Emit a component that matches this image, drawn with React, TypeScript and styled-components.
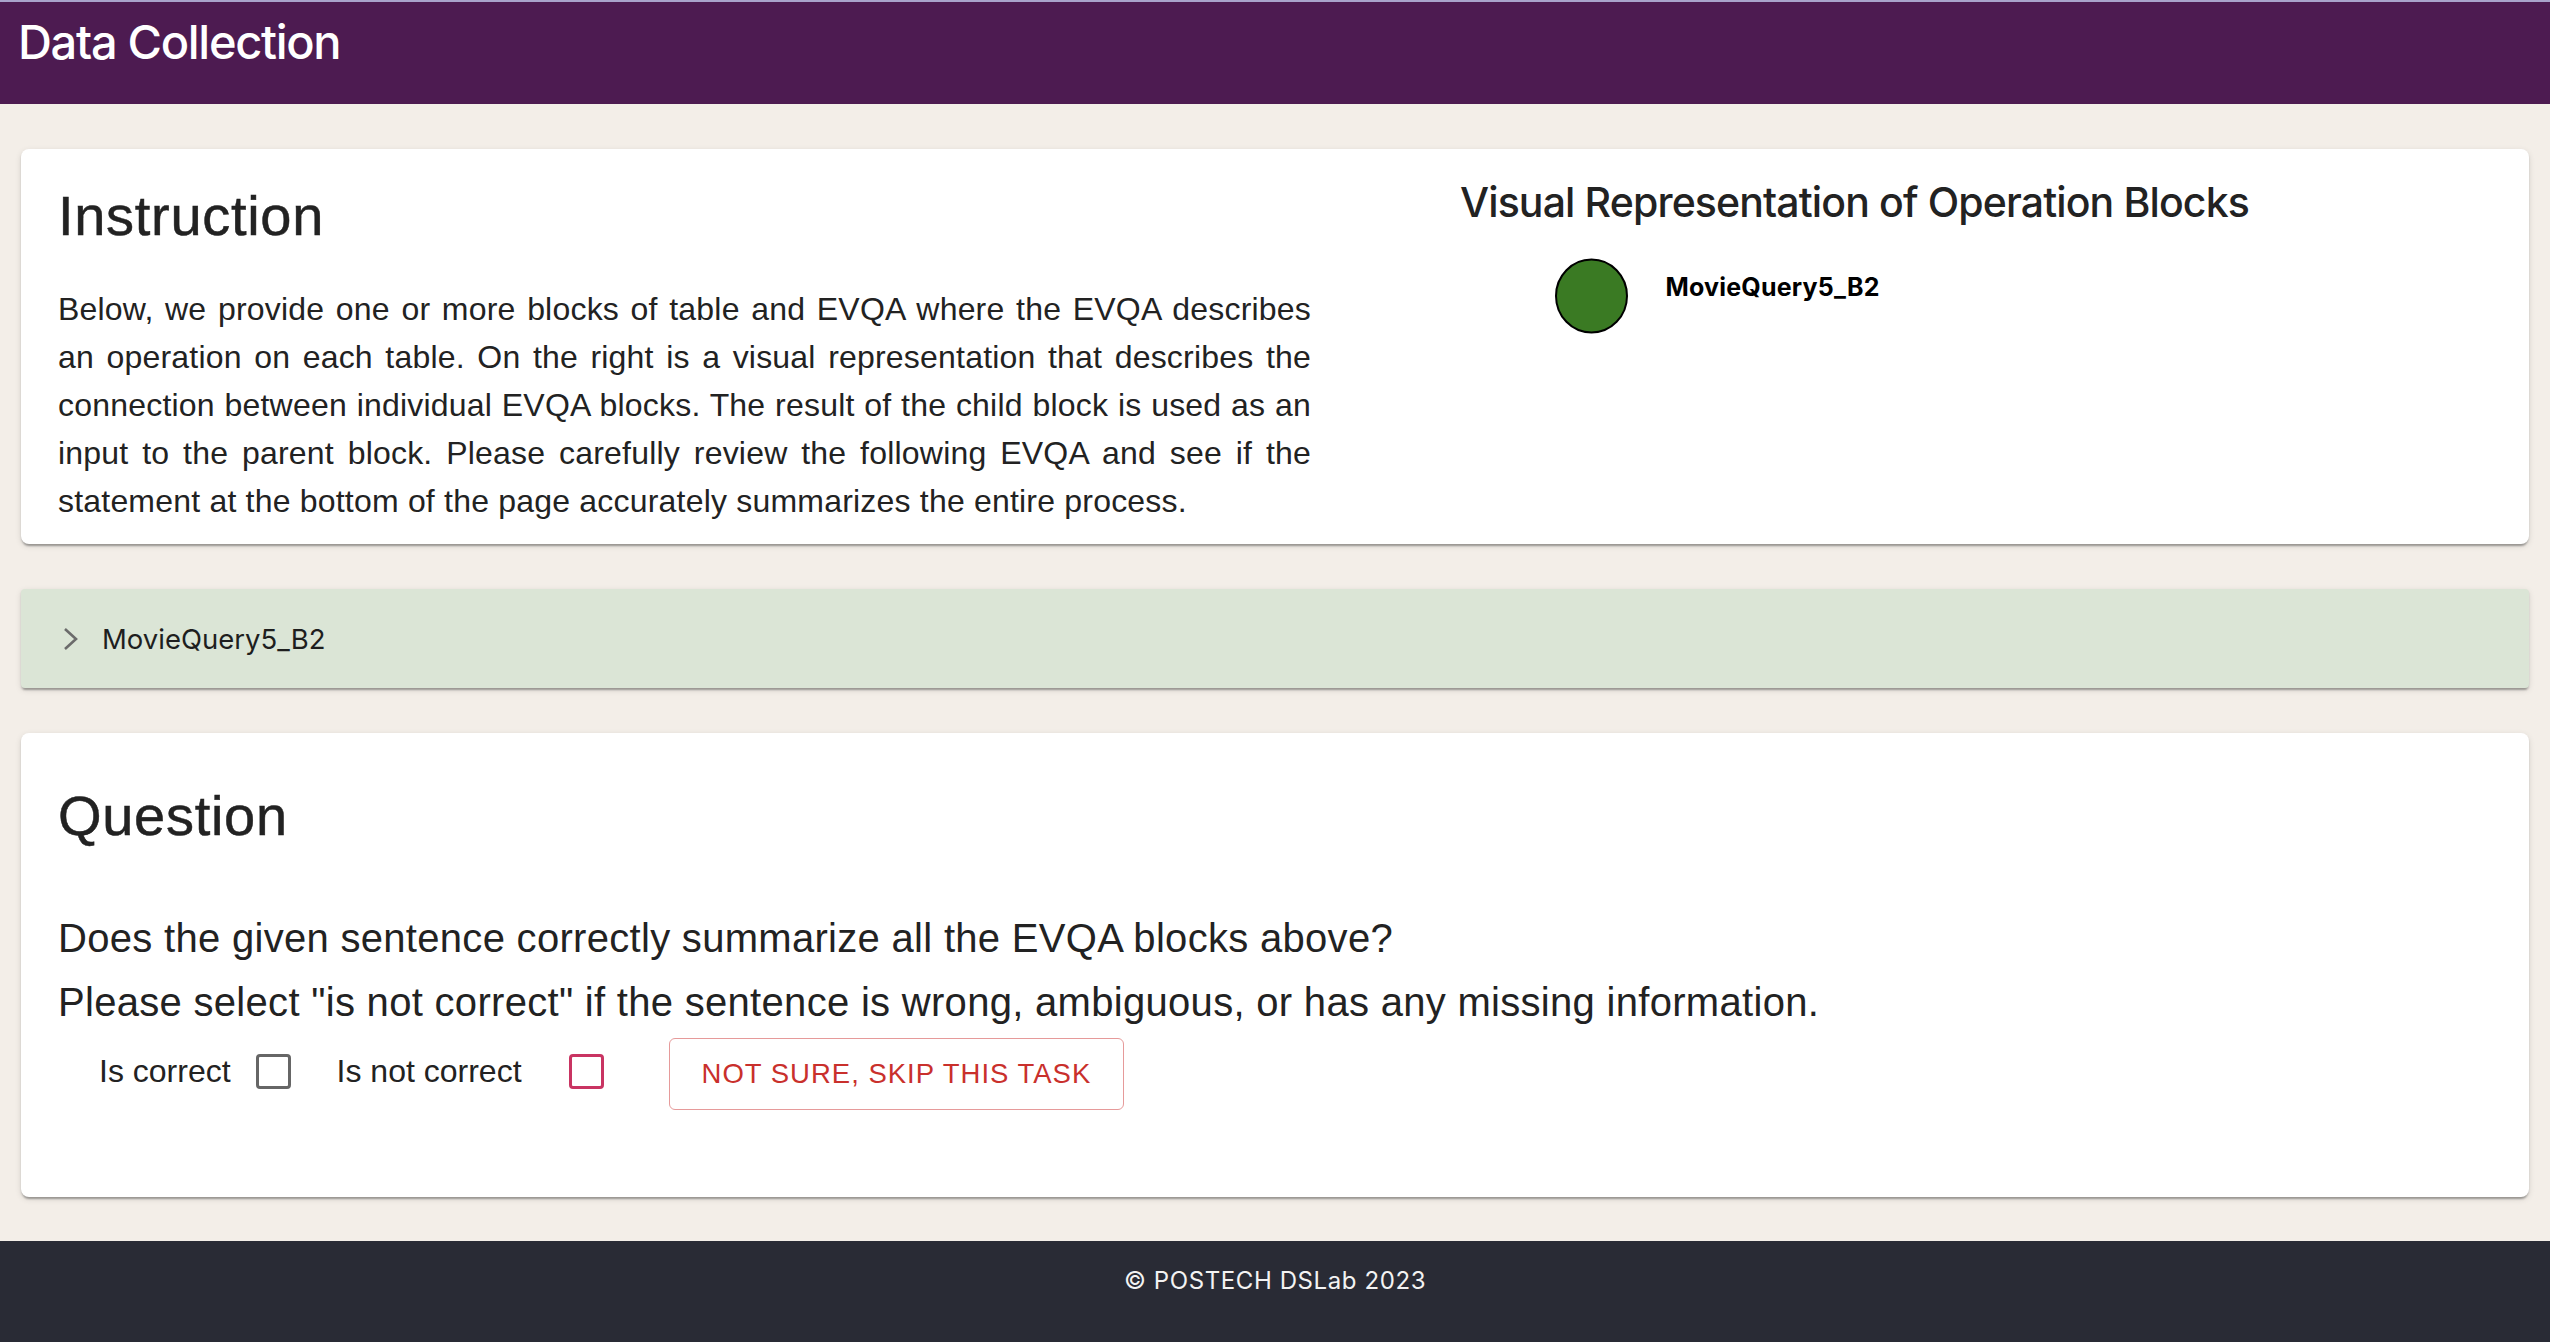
import React from "react";
import styled, { createGlobalStyle } from "styled-components";

const GlobalStyle = createGlobalStyle`
  html, body { margin: 0; padding: 0; }
  body {
    background: #f3eee8;
    font-family: "Liberation Sans", Arial, sans-serif;
    color: #222222;
  }
  * { box-sizing: border-box; }
`;

const Page = styled.div`
  display: flex;
  flex-direction: column;
  min-height: 1342px;
`;

const Header = styled.header`
  height: 104px;
  background: #4d1b51;
  border-top: 2px solid #a9a3cb;
  padding: 12px 18px 0;
`;

const Title = styled.h1`
  margin: 0;
  font-family: Inter, "Noto Sans", sans-serif;
  font-weight: 500;
  font-size: 47px;
  line-height: 1.2;
  color: #ffffff;
  letter-spacing: -1.3px;
`;

const Main = styled.main`
  flex: 1;
  display: flex;
  flex-direction: column;
  gap: 45px;
  padding: 45px 21px 44px;
`;

const Card = styled.section<{ $pt: number; $pb: number }>`
  background: #ffffff;
  border-radius: 8px;
  padding: ${(p) => p.$pt}px 37px ${(p) => p.$pb}px;
  box-shadow: 0 4px 2px -2px rgba(0, 0, 0, 0.2), 0 2px 2px 0 rgba(0, 0, 0, 0.14),
    0 2px 6px 0 rgba(0, 0, 0, 0.12);
`;

const InstructionGrid = styled.div`
  display: grid;
  grid-template-columns: 1253px 1fr;
  column-gap: 149px;
`;

const Column = styled.div`
  display: flex;
  flex-direction: column;
`;

const SectionTitle = styled.h2<{ $mt?: number; $mb: number }>`
  margin: ${(p) => p.$mt ?? 0}px 0 ${(p) => p.$mb}px;
  font-family: "Liberation Sans", Arial, sans-serif;
  font-weight: 400;
  font-size: 56px;
  line-height: 1.2;
  letter-spacing: 0.7px;
  color: #222222;
  -webkit-text-stroke: 0.5px #222222;
`;

const Paragraph = styled.p`
  margin: 0;
  font-size: 32px;
  line-height: 48px;
  letter-spacing: 0.2px;
  text-align: justify;
  color: #222222;
`;

const VisualTitle = styled.h3`
  margin: 0;
  font-family: Inter, "Noto Sans", sans-serif;
  font-weight: 500;
  font-size: 41px;
  line-height: 1.2;
  color: #222222;
  letter-spacing: -0.87px;
  white-space: nowrap;
`;

const Graph = styled.svg`
  display: block;
  width: 100%;
  height: 150px;
`;

const NodeLabel = styled.text`
  font-family: Inter, "Noto Sans", sans-serif;
  font-weight: 700;
  font-size: 25px;
  letter-spacing: 0.2px;
  fill: #000000;
`;

const AccordionBar = styled.div`
  height: 99px;
  background: #dbe5d6;
  border-radius: 4px;
  display: flex;
  align-items: center;
  gap: 23px;
  padding-left: 42px;
  box-shadow: 0 4px 2px -2px rgba(0, 0, 0, 0.2), 0 2px 2px 0 rgba(0, 0, 0, 0.14),
    0 2px 6px 0 rgba(0, 0, 0, 0.12);
`;

const AccordionLabel = styled.span`
  font-family: Inter, "Noto Sans", sans-serif;
  font-size: 27.5px;
  color: #1e1e1e;
`;

const QuestionLine = styled.p`
  margin: 0;
  font-size: 40px;
  line-height: 64px;
  letter-spacing: 0.3px;
  color: #222222;
  white-space: nowrap;
`;

const Controls = styled.div`
  display: flex;
  align-items: center;
  margin-top: 4px;
  padding-left: 41px;
  height: 72px;
`;

const OptionLabel = styled.label<{ $gap: number; $after: number }>`
  display: inline-flex;
  align-items: center;
  gap: ${(p) => p.$gap}px;
  margin-right: ${(p) => p.$after}px;
  font-size: 32px;
  color: #222222;
  cursor: pointer;
  span { position: relative; top: -3px; }
`;

const Box = styled.span<{ $color: string }>`
  display: inline-block;
  width: 35px;
  height: 35px;
  border: 3.5px solid ${(p) => p.$color};
  border-radius: 4px;
  background: #ffffff;
`;

const SkipButton = styled.button`
  height: 72px;
  padding: 0 32px;
  background: #ffffff;
  border: 1.5px solid #e69a9a;
  border-radius: 6px;
  font-family: "Liberation Sans", Arial, sans-serif;
  font-size: 27.5px;
  letter-spacing: 1px;
  text-transform: uppercase;
  color: #c9302c;
  cursor: pointer;
`;

const Footer = styled.footer`
  background: #292b35;
  padding: 26px 0 46px;
  text-align: center;
  font-family: Inter, "Noto Sans", sans-serif;
  font-size: 24px;
  line-height: 1.2;
  letter-spacing: 0.6px;
  color: #f3f3f3;
`;

const Chevron = () => (
  <svg width="16" height="24" viewBox="0 0 16 24" aria-hidden="true">
    <polyline points="2,2 13,12 2,22" fill="none" stroke="#6b6b6b" strokeWidth="2.6" />
  </svg>
);

export default function App() {
  return (
    <>
      <GlobalStyle />
      <Page>
        <Header>
          <Title>Data Collection</Title>
        </Header>
        <Main>
          <Card $pt={29} $pb={19}>
            <InstructionGrid>
              <Column>
                <SectionTitle $mt={4} $mb={36}>Instruction</SectionTitle>
                <Paragraph>
                  Below, we provide one or more blocks of table and EVQA where the EVQA describes
                  an operation on each table. On the right is a visual representation that
                  describes the connection between individual EVQA blocks. The result of the child
                  block is used as an input to the parent block. Please carefully review the
                  following EVQA and see if the statement at the bottom of the page accurately
                  summarizes the entire process.
                </Paragraph>
              </Column>
              <Column>
                <VisualTitle>Visual Representation of Operation Blocks</VisualTitle>
                <Graph viewBox="0 0 1031 150">
                  <ellipse cx="131" cy="69" rx="35.5" ry="36.5" fill="#3a7a23" stroke="#000" strokeWidth="2" />
                  <NodeLabel x="205" y="69">MovieQuery5_B2</NodeLabel>
                </Graph>
              </Column>
            </InstructionGrid>
          </Card>

          <AccordionBar>
            <Chevron />
            <AccordionLabel>MovieQuery5_B2</AccordionLabel>
          </AccordionBar>

          <Card $pt={49} $pb={87}>
            <SectionTitle $mb={57}>Question</SectionTitle>
            <QuestionLine>Does the given sentence correctly summarize all the EVQA blocks above?</QuestionLine>
            <QuestionLine>
              Please select "is not correct" if the sentence is wrong, ambiguous, or has any missing
              information.
            </QuestionLine>
            <Controls>
              <OptionLabel $gap={25} $after={46}>
                <span>Is correct</span>
                <Box $color="#666666" />
              </OptionLabel>
              <OptionLabel $gap={47} $after={65}>
                <span>Is not correct</span>
                <Box $color="#c93462" />
              </OptionLabel>
              <SkipButton>Not sure, skip this task</SkipButton>
            </Controls>
          </Card>
        </Main>
        <Footer>© POSTECH DSLab 2023</Footer>
      </Page>
    </>
  );
}
